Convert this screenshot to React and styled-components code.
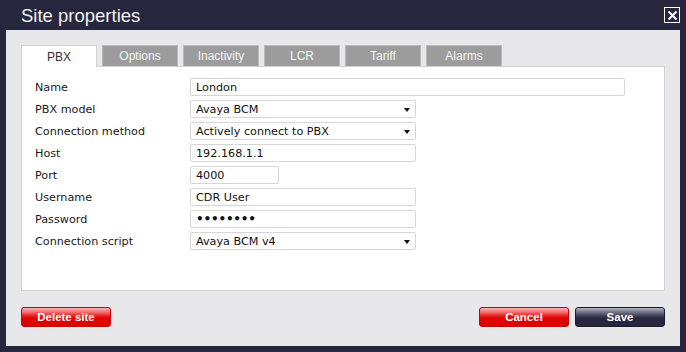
import React from "react";
import styled, { createGlobalStyle } from "styled-components";

const GlobalStyle = createGlobalStyle`
  html, body {
    margin: 0;
    padding: 0;
    background: #26263f;
  }
  * {
    box-sizing: border-box;
  }
`;

const Dialog = styled.div`
  width: 686px;
  height: 352px;
  background: #26263f;
  padding: 0 6px 6px;
  display: flex;
  flex-direction: column;
`;

const TitleBar = styled.div`
  height: 30px;
  display: flex;
  align-items: center;
  justify-content: space-between;
  padding-left: 15px;
`;

const Title = styled.h1`
  margin: 0;
  font-family: "Liberation Sans", Arial, sans-serif;
  font-weight: normal;
  font-size: 18.5px;
  color: #f2f2f2;
  padding-top: 2px;
`;

const CloseButton = styled.button`
  width: 16px;
  height: 16px;
  padding: 0;
  border: 1.5px solid #ffffff;
  background: transparent;
  display: flex;
  align-items: center;
  justify-content: center;
  cursor: pointer;
`;

const Body = styled.div`
  flex: 1;
  background: #e8e8ea;
  padding: 15px 15px 0;
  display: flex;
  flex-direction: column;
`;

const TabStrip = styled.div`
  display: flex;
  gap: 5px;
  height: 21px;
`;

const Tab = styled.div`
  width: 76px;
  height: ${(props) => (props.$active ? "22px" : "21px")};
  display: flex;
  align-items: center;
  justify-content: center;
  font-family: "Liberation Sans", Arial, sans-serif;
  font-size: 12px;
  color: ${(props) => (props.$active ? "#333" : "#f4f4f4")};
  background: ${(props) => (props.$active ? "#ffffff" : "#9c9c9c")};
  border: 1px solid ${(props) => (props.$active ? "#d2d2d2" : "#b9b9b9")};
  border-bottom: none;
  position: relative;
  z-index: ${(props) => (props.$active ? 1 : 0)};
`;

const Panel = styled.div`
  height: 225px;
  background: #ffffff;
  border: 1px solid #d2d2d2;
  padding: 11px 13px 0;
  display: flex;
  flex-direction: column;
  gap: 4px;
`;

const Row = styled.div`
  display: flex;
  align-items: center;
  height: 18px;
`;

const Label = styled.label`
  width: 155px;
  flex-shrink: 0;
  font-family: "DejaVu Sans", Verdana, sans-serif;
  font-size: 11.2px;
  color: #1a1a1a;
`;

const TextInput = styled.input`
  width: ${(props) => props.$width}px;
  height: 18px;
  border: 1px solid #d6d6d6;
  border-radius: 2px;
  padding: 0 5px;
  font-family: "DejaVu Sans", Verdana, sans-serif;
  font-size: ${(props) => (props.$dots ? "12px" : "11.2px")};
  color: #111;
  background: #fff;
  outline: none;
  letter-spacing: ${(props) => (props.$dots ? "-0.2px" : "normal")};
  font-weight: ${(props) => (props.$dots ? "bold" : "normal")};
`;

const Select = styled.div`
  width: ${(props) => props.$width}px;
  height: 18px;
  border: 1px solid #d6d6d6;
  border-radius: 2px;
  padding: 0 5px;
  display: flex;
  align-items: center;
  justify-content: space-between;
  font-family: "DejaVu Sans", Verdana, sans-serif;
  font-size: 11.2px;
  color: #111;
  background: #fff;
`;

const Arrow = styled.span`
  width: 0;
  height: 0;
  border-left: 3.5px solid transparent;
  border-right: 3.5px solid transparent;
  border-top: 4px solid #111;
  margin-top: 2px;
`;

const Footer = styled.div`
  display: flex;
  align-items: center;
  margin-top: 16px;
  gap: 6px;
`;

const Spacer = styled.div`
  flex: 1;
`;

const Button = styled.button`
  width: 90px;
  height: 20px;
  padding: 0;
  border-radius: 3px;
  border: 1px solid ${(props) => (props.$variant === "dark" ? "#1b1b30" : "#c80000")};
  font-family: "Liberation Sans", Arial, sans-serif;
  font-weight: bold;
  font-size: 11.5px;
  color: #ffffff;
  cursor: pointer;
  background: ${(props) =>
    props.$variant === "dark"
      ? "linear-gradient(to bottom, #b4b4c0 0%, #7a7a8e 20%, #3a3a55 45%, #26263f 60%, #26263f 100%)"
      : "linear-gradient(to bottom, #fab4b4 0%, #f27a7a 20%, #e61a1a 45%, #e00000 60%, #e00000 100%)"};
`;

const tabs = ["PBX", "Options", "Inactivity", "LCR", "Tariff", "Alarms"];

const fields = [
  { label: "Name", value: "London", width: 435 },
  { label: "PBX model", value: "Avaya BCM", width: 226, select: true },
  { label: "Connection method", value: "Actively connect to PBX", width: 226, select: true },
  { label: "Host", value: "192.168.1.1", width: 226 },
  { label: "Port", value: "4000", width: 89 },
  { label: "Username", value: "CDR User", width: 226 },
  { label: "Password", value: "\u2022\u2022\u2022\u2022\u2022\u2022\u2022\u2022", width: 226, dots: true },
  { label: "Connection script", value: "Avaya BCM v4", width: 226, select: true },
];

export default function App() {
  return (
    <>
      <GlobalStyle />
      <Dialog>
        <TitleBar>
          <Title>Site properties</Title>
          <CloseButton aria-label="Close">
            <svg width="11" height="11" viewBox="0 0 11 11">
              <path d="M1.5 1.5 L9.5 9.5 M9.5 1.5 L1.5 9.5" stroke="#fff" strokeWidth="2" />
            </svg>
          </CloseButton>
        </TitleBar>
        <Body>
          <TabStrip>
            {tabs.map((t, i) => (
              <Tab key={t} $active={i === 0}>
                {t}
              </Tab>
            ))}
          </TabStrip>
          <Panel>
            {fields.map((f) => (
              <Row key={f.label}>
                <Label>{f.label}</Label>
                {f.select ? (
                  <Select $width={f.width}>
                    <span>{f.value}</span>
                    <Arrow />
                  </Select>
                ) : (
                  <TextInput $width={f.width} $dots={f.dots} readOnly value={f.value} />
                )}
              </Row>
            ))}
          </Panel>
          <Footer>
            <Button>Delete site</Button>
            <Spacer />
            <Button>Cancel</Button>
            <Button $variant="dark">Save</Button>
          </Footer>
        </Body>
      </Dialog>
    </>
  );
}
